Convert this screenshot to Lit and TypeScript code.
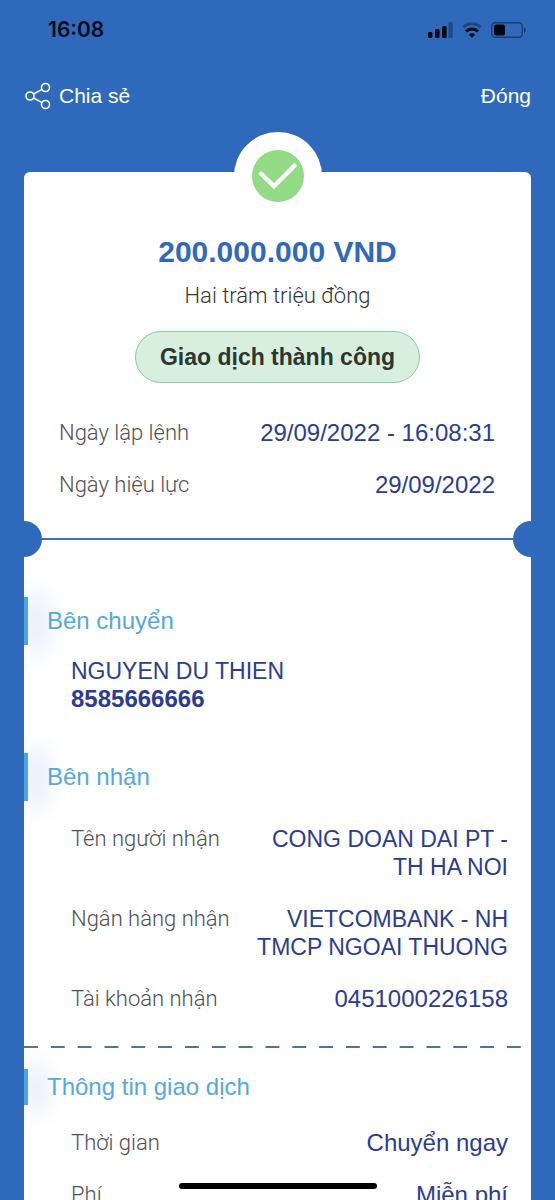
import { LitElement, html, css, svg } from "lit";
import { customElement, property } from "lit/decorators.js";
import { classMap } from "lit/directives/class-map.js";

interface Detail {
  label: string;
  value: string;
  name?: boolean;
}

const timestamps: Detail[] = [
  { label: "Ngày lập lệnh", value: "29/09/2022 - 16:08:31" },
  { label: "Ngày hiệu lực", value: "29/09/2022" },
];

const receiver: Detail[] = [
  { label: "Tên người nhận", value: "CONG DOAN DAI PT - TH HA NOI", name: true },
  { label: "Ngân hàng nhận", value: "VIETCOMBANK - NH TMCP NGOAI THUONG", name: true },
  { label: "Tài khoản nhận", value: "0451000226158" },
];

const transaction: Detail[] = [
  { label: "Thời gian", value: "Chuyển ngay" },
  { label: "Phí", value: "Miễn phí" },
];

@customElement("phone-status")
export class PhoneStatus extends LitElement {
  static styles = css`
    :host {
      display: flex;
      align-items: center;
      justify-content: space-between;
      height: 60px;
      padding: 0 28px 0 48px;
      color: #030a1c;
      font: 600 21px/24px Inter, sans-serif;
    }
    .signals {
      display: flex;
      align-items: center;
      gap: 9px;
    }
    svg {
      display: block;
    }
  `;

  render() {
    return html`
      <span>16:08</span>
      <span class="signals">
        <svg width="25" height="16" viewBox="0 0 25 16" fill="#02060f">
          <rect x="0" y="10" width="4.4" height="6" rx="1.5" />
          <rect x="7" y="7" width="4.6" height="9" rx="1.5" />
          <rect x="14" y="4" width="4.6" height="12" rx="1.5" />
          <rect x="20.4" y="0" width="4.4" height="16" rx="1.5" opacity=".3" />
        </svg>
        <svg width="20" height="16" viewBox="0 0 20 16" fill="none" stroke="#02060f" stroke-width="3">
          <path d="M1.4 5.3a12.2 12.2 0 0 1 17.2 0" opacity=".35" />
          <path d="M4 9.4a8.4 8.4 0 0 1 12 0" />
          <path d="M10 16 7 12.8a4.3 4.3 0 0 1 6 0Z" fill="#02060f" stroke="none" />
        </svg>
        <svg width="36" height="16" viewBox="0 0 36 16">
          <rect x=".7" y=".7" width="30.6" height="14.6" rx="3.6" fill="none" stroke="#02060f" stroke-width="1.4" opacity=".45" />
          <rect x="3" y="2.6" width="11" height="10.8" rx="2" fill="#02060f" />
          <path d="M33 5.4c2.4.8 2.4 4.6 0 5.4Z" fill="#02060f" opacity=".5" />
        </svg>
      </span>
    `;
  }
}

@customElement("detail-list")
export class DetailList extends LitElement {
  @property({ attribute: false }) items: Detail[] = [];

  static styles = css`
    :host {
      display: block;
    }
    .list {
      display: flex;
      flex-direction: column;
      gap: 24px;
      margin: 0;
    }
    .row {
      display: flex;
      justify-content: space-between;
      gap: 16px;
    }
    .label {
      flex: none;
      color: #505052;
      font-family: Roboto, "Liberation Sans", sans-serif;
      font-size: 22px;
      font-weight: 300;
    }
    .value {
      margin: 0;
      color: #2b3d91;
      text-align: right;
    }
    .value.name {
      font-size: 23px;
    }
  `;

  render() {
    return html`
      <dl class="list">
        ${this.items.map(
          (item) => html`
            <div class="row">
              <dt class="label">${item.label}</dt>
              <dd class=${classMap({ value: true, name: !!item.name })}>${item.value}</dd>
            </div>
          `,
        )}
      </dl>
    `;
  }
}

const shareIcon = svg`
  <circle cx="6" cy="14" r="4" />
  <circle cx="21.5" cy="5.5" r="4" />
  <circle cx="21.5" cy="22.5" r="4" />
  <path d="M9.6 12 18 7.4M9.6 16 18 20.6" />
`;

@customElement("app-root")
export class AppRoot extends LitElement {
  static styles = css`
    :host {
      display: block;
      position: relative;
      height: 100vh;
      overflow: hidden;
      background: #2f69bc;
      font: 24px/28px "Liberation Sans", Arial, sans-serif;
    }
    .nav {
      display: flex;
      align-items: center;
      justify-content: space-between;
      height: 72px;
      padding: 0 24px;
    }
    .action {
      display: flex;
      align-items: center;
      gap: 8px;
      padding: 0;
      border: 0;
      background: none;
      color: #fff;
      font: inherit;
      font-size: 21px;
      cursor: pointer;
    }
    .share {
      fill: none;
      stroke: #fff;
      stroke-width: 1.6;
    }
    .card {
      margin: 40px 24px 0;
      border-radius: 6px 6px 0 0;
      background: #fff;
    }
    .summary {
      display: flex;
      flex-direction: column;
      align-items: center;
    }
    .bump {
      display: grid;
      place-items: center;
      width: 88px;
      height: 88px;
      margin-top: -40px;
      border-radius: 50%;
      background: #fff;
    }
    .amount {
      margin: 14px 0 0;
      color: #2f69b8;
      font-size: 30px;
      line-height: 36px;
    }
    .words {
      margin: 12px 0 0;
      color: #343436;
      font-family: Roboto, "Liberation Sans", sans-serif;
      font-size: 22px;
      font-weight: 300;
    }
    .status {
      margin: 21px 0 0;
      padding: 11px 24px;
      border: 1px solid #84cf9a;
      border-radius: 26px;
      background: #d9efde;
      color: #2d3630;
      font-size: 23px;
      font-weight: 700;
    }
    .dates {
      margin: 36px 36px 22px 35px;
    }
    .tear {
      display: flex;
      align-items: center;
      justify-content: space-between;
    }
    .notch {
      width: 18px;
      height: 36px;
      border-radius: 0 18px 18px 0;
      background: #2f69bc;
    }
    .notch.end {
      border-radius: 18px 0 0 18px;
    }
    .line {
      flex: 1;
      height: 2px;
      background: #4170b4;
    }
    .heading {
      display: flex;
      gap: 19px;
      margin: 40px 0 0;
      color: #55a9dc;
      font-size: 24px;
      font-weight: 400;
      line-height: 48px;
      clip-path: inset(-30px 0);
    }
    .heading::before {
      content: "";
      width: 4px;
      background: #4ba5e4;
      box-shadow: 10px 2px 24px 4px #cdd8f2;
    }
    .heading.compact {
      margin-top: 21px;
      line-height: 36px;
    }
    .sender {
      margin: 12px 24px 0 47px;
      color: #2b3d91;
    }
    .party {
      margin: 0;
    }
    .party.name {
      font-size: 23px;
    }
    .details {
      margin: 24px 23px 0 47px;
    }
    .dashes {
      height: 2px;
      margin: 33px 10px 0 0;
      background: linear-gradient(90deg, #5272a2 14px, #fff0 14px) 0 0 / calc((100% - 14px) / 18) 2px;
    }
    .home {
      position: absolute;
      bottom: 11px;
      left: 50%;
      width: 198px;
      height: 6px;
      margin-left: -99px;
      border-radius: 3px;
      background: #000;
    }
  `;

  render() {
    return html`
      <phone-status></phone-status>
      <nav class="nav">
        <button class="action" type="button">
          <svg class="share" width="27" height="28" viewBox="0 0 27 28">${shareIcon}</svg>
          Chia sẻ
        </button>
        <button class="action" type="button">Đóng</button>
      </nav>
      <main class="card">
        <div class="summary">
          <div class="bump">
            <svg width="52" height="52" viewBox="0 0 52 52" fill="none">
              <circle cx="26" cy="26" r="26" fill="#91db84" />
              <path d="M9 23.5 22 36.2 42.6 15.6" stroke="#fff" stroke-width="4.4" stroke-linecap="round" />
            </svg>
          </div>
          <h1 class="amount">200.000.000 VND</h1>
          <p class="words">Hai trăm triệu đồng</p>
          <p class="status">Giao dịch thành công</p>
        </div>
        <detail-list class="dates" .items=${timestamps}></detail-list>
        <div class="tear">
          <span class="notch"></span>
          <span class="line"></span>
          <span class="notch end"></span>
        </div>
        <h2 class="heading">Bên chuyển</h2>
        <div class="sender">
          <p class="party name">NGUYEN DU THIEN</p>
          <p class="party"><strong>8585666666</strong></p>
        </div>
        <h2 class="heading">Bên nhận</h2>
        <detail-list class="details" .items=${receiver}></detail-list>
        <div class="dashes"></div>
        <h2 class="heading compact">Thông tin giao dịch</h2>
        <detail-list class="details" .items=${transaction}></detail-list>
      </main>
      <div class="home"></div>
    `;
  }
}
